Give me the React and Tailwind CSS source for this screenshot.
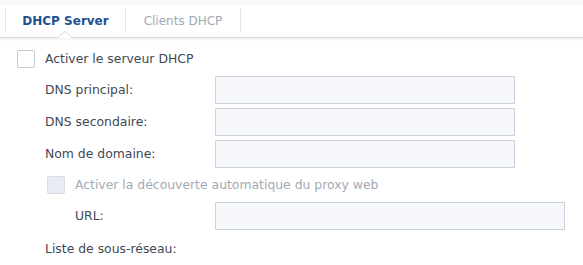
import React from 'react';

const font = { fontFamily: '"DejaVu Sans", Verdana, sans-serif' };

const Checkbox = ({ disabled }) => (
  <span
    className={`block w-[18px] h-[18px] rounded-[2px] border ${
      disabled ? 'bg-[#e7ecf2] border-[#d6dde5]' : 'bg-white border-[#c3cad3]'
    }`}
  />
);

const Field = ({ width = 'w-[300px]' }) => (
  <div className={`${width} h-[28px] bg-[#f5f7fa] border border-[#c9d3de] rounded-[1px]`} />
);

const Row = ({ label, indent, className = '', children }) => (
  <div className={`flex items-center h-[28px] ${className}`}>
    <span className={`${indent ? 'pl-[75px] w-[215px]' : 'pl-[45px] w-[215px]'} text-[#3f4953]`}>
      {label}
    </span>
    {children}
  </div>
);

export default function App() {
  return (
    <div className="w-[583px] h-[265px] bg-white overflow-hidden text-[12.4px]" style={font}>
      {/* tab strip */}
      <div className="h-[5px] bg-[#f6f8fa]" />
      <div className="relative flex items-center h-[33px] pl-[5px] border-b border-[#d5d9dd] text-[12px]">
        <span className="w-px h-[24px] bg-[#dfe4ea]" />
        <div className="relative flex items-center justify-center h-full w-[119px] font-bold text-[#1e5092]">
          DHCP Server
          <svg className="absolute left-[52px] bottom-[-1px]" width="14" height="7" viewBox="0 0 14 7">
            <polygon points="0,6.5 7,0.5 14,6.5" fill="#fff" />
            <polyline points="0,6.5 7,0.5 14,6.5" fill="none" stroke="#d5d9dd" strokeWidth="1" />
            <rect x="1" y="6" width="12" height="1" fill="#fff" />
          </svg>
        </div>
        <span className="w-px h-[24px] bg-[#dfe4ea]" />
        <div className="flex items-center justify-center h-full w-[114px] text-[#a1a9b3]">
          Clients DHCP
        </div>
        <span className="w-px h-[24px] bg-[#dfe4ea]" />
      </div>
      <div className="h-[3px] bg-gradient-to-b from-[#eef0f2] to-white" />

      {/* form */}
      <div className="flex flex-col pt-[4px]">
        <div className="flex items-center h-[28px] pl-[17px] gap-[10px] text-[#3f4953]">
          <Checkbox />
          <span>Activer le serveur DHCP</span>
        </div>
        <Row label="DNS principal:" className="mt-[3px]">
          <Field />
        </Row>
        <Row label="DNS secondaire:" className="mt-[4px]">
          <Field />
        </Row>
        <Row label="Nom de domaine:" className="mt-[4px]">
          <Field />
        </Row>
        <div className="flex items-center h-[28px] mt-[3px] pl-[47px] gap-[10px] text-[#a2aab4]">
          <Checkbox disabled />
          <span>Activer la découverte automatique du proxy web</span>
        </div>
        <Row label="URL:" indent className="mt-[3px]">
          <Field width="w-[350px]" />
        </Row>
        <Row label="Liste de sous-réseau:" className="mt-[5px]" />
      </div>
    </div>
  );
}
